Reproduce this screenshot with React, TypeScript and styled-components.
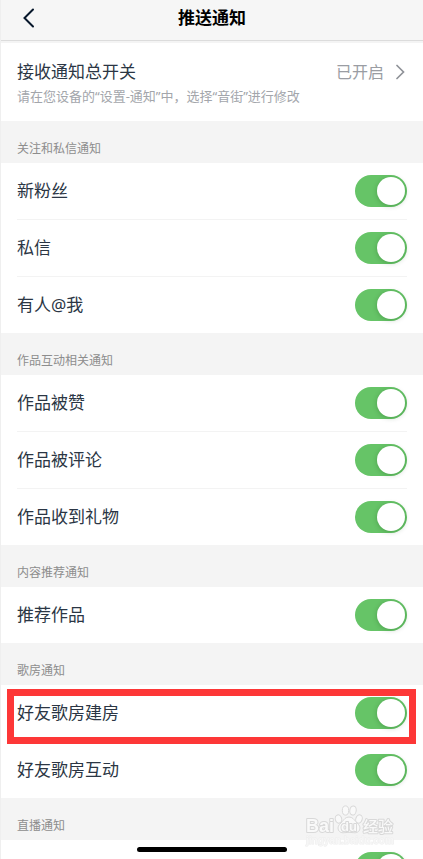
import React, { useId, useState } from 'react';
import styled, { createGlobalStyle } from 'styled-components';

const GlobalStyle = createGlobalStyle`
  *, *::before, *::after { box-sizing: border-box; }
  body {
    margin: 0;
    background: #f4f4f4;
    font-family: "Noto Sans", "Noto Sans CJK SC", sans-serif;
  }
`;

const Screen = styled.div`
  display: flex;
  flex-direction: column;
  height: 100vh;
  overflow: hidden;
  border-left: 1px solid #efefef;
  background: #f4f4f4;
`;

const TopBar = styled.header`
  display: grid;
  grid-template-columns: 56px 1fr 56px;
  align-items: center;
  flex: none;
  height: 41px;
  padding-bottom: 5px;
  background: #f6f6f6;
  border-bottom: 1px solid #dcdcdc;
`;

const BackButton = styled.button`
  display: flex;
  align-items: center;
  height: 32px;
  padding: 0 0 0 21px;
  border: 0;
  background: none;
  color: #07172b;
`;

const Title = styled.h1`
  margin: 0;
  font-size: 17px;
  line-height: 24px;
  font-weight: 700;
  text-align: center;
  color: #000;
`;

const Content = styled.main`
  flex: 1;
  min-height: 0;
  overflow-y: auto;
  padding-top: 2px;
  scrollbar-width: none;
`;

const MasterLink = styled.a`
  display: block;
  padding: 17px 16px 16px;
  background: #fff;
  color: #2b3644;
  text-decoration: none;
`;

const MasterLine = styled.span`
  display: flex;
  align-items: center;
  font-size: 17px;
  line-height: 24px;
`;

const MasterState = styled.span`
  margin-left: auto;
  margin-right: 12px;
  font-size: 16px;
  color: #9a9da3;
`;

const Hint = styled.span`
  display: block;
  margin-top: 3px;
  font-size: 13px;
  line-height: 18px;
  color: #a3a6ab;
`;

const GroupTitle = styled.h2`
  margin: 0;
  padding: 19px 16px 5px;
  font-size: 12px;
  line-height: 18px;
  font-weight: 400;
  color: #8d8d8d;
`;

const List = styled.ul`
  margin: 0;
  padding: 0;
  list-style: none;
  background: #fff;
`;

const Row = styled.li<{ $marked?: boolean }>`
  position: relative;
  padding: 0 16px;

  &:not(:last-child) > div {
    border-bottom: 1px solid #f3f3f3;
  }

  ${({ $marked }) =>
    $marked &&
    `
    &::after {
      content: "";
      position: absolute;
      inset: 4px 7px -2px 6px;
      border: 7px solid #fd3737;
      pointer-events: none;
    }
  `}
`;

const RowBody = styled.div`
  display: flex;
  align-items: center;
  justify-content: space-between;
  padding: 12px 0;
`;

const RowLabel = styled.label`
  font-size: 17px;
  line-height: 24px;
  color: #2b3644;
`;

const Toggle = styled.input`
  appearance: none;
  position: relative;
  flex: none;
  width: 52px;
  height: 32px;
  margin: 0 0 0 auto;
  border-radius: 16px;
  background: #e3e3e5;

  &:checked {
    background: #66c467;
  }

  &::before {
    content: "";
    position: absolute;
    top: 2px;
    left: 2px;
    width: 28px;
    height: 28px;
    border-radius: 50%;
    background: #fff;
    box-shadow: 0 1px 5px rgba(0, 60, 0, 0.25);
  }

  &:checked::before {
    left: 22px;
  }
`;

const HomeIndicator = styled.div`
  position: fixed;
  left: 50%;
  bottom: 7px;
  width: 150px;
  height: 5px;
  border-radius: 3px;
  background: #000;
  transform: translateX(-50%);
`;

const Watermark = styled.svg`
  position: fixed;
  right: 8px;
  bottom: 0;
  width: 120px;
  height: 64px;
  pointer-events: none;
`;

interface Item {
  label: string;
  name?: string;
  marked?: boolean;
}

const groups: { title: string; items: Item[] }[] = [
  {
    title: '关注和私信通知',
    items: [{ label: '新粉丝' }, { label: '私信' }, { label: '有人@我' }],
  },
  {
    title: '作品互动相关通知',
    items: [{ label: '作品被赞' }, { label: '作品被评论' }, { label: '作品收到礼物' }],
  },
  { title: '内容推荐通知', items: [{ label: '推荐作品' }] },
  {
    title: '歌房通知',
    items: [{ label: '好友歌房建房', marked: true }, { label: '好友歌房互动' }],
  },
  { title: '直播通知', items: [{ label: '', name: '直播通知' }] },
];

function SwitchRow({ label, name, marked }: Item) {
  const id = useId();
  const [on, setOn] = useState(true);
  return (
    <Row $marked={marked}>
      <RowBody>
        {label && <RowLabel htmlFor={id}>{label}</RowLabel>}
        <Toggle
          id={id}
          type="checkbox"
          role="switch"
          aria-label={name}
          checked={on}
          onChange={(e) => setOn(e.target.checked)}
        />
      </RowBody>
    </Row>
  );
}

function BaiduMark() {
  return (
    <Watermark viewBox="0 0 120 64" aria-hidden="true">
      <g
        fill="#f9f9f9"
        stroke="#d8d8d8"
        strokeWidth="1"
        strokeLinejoin="round"
        fontFamily='"Liberation Sans", "Noto Sans CJK SC", sans-serif'
      >
        <ellipse cx="43.5" cy="24" rx="3.2" ry="4.2" transform="rotate(-14 43.5 24)" />
        <ellipse cx="50.5" cy="15.5" rx="3.2" ry="4.6" />
        <ellipse cx="58" cy="15.5" rx="3.2" ry="4.6" transform="rotate(8 58 15.5)" />
        <ellipse cx="64" cy="24" rx="3.2" ry="4.2" transform="rotate(18 64 24)" />
        <path d="M54 22c-3.400 0-5 2.400-6.700 4.500-1.900 2.300-4.300 3.600-4.300 6.500 0 3 2.300 4.800 5 4.800 2 0 4-.500 6-.500s4 .500 6 .500c2.700 0 5-1.800 5-4.800 0-2.900-2.400-4.200-4.300-6.500C59 24.400 57.400 22 54 22z" />
        <g fontWeight="700" strokeWidth="2" paintOrder="stroke">
          <text x="11" y="37" fontSize="18">Bai</text>
          <text x="46" y="36" fontSize="13">du</text>
          <text x="68" y="37" fontSize="15" fontWeight="500">经验</text>
          <text x="11" y="49" fontSize="10" fill="#f6f6f6" stroke="#ededed" strokeWidth="1">jingyan.baidu.com</text>
        </g>
      </g>
    </Watermark>
  );
}

export default function App() {
  return (
    <>
      <GlobalStyle />
      <Screen>
        <TopBar>
          <BackButton type="button" aria-label="返回">
            <svg width="14" height="20" viewBox="0 0 14 20" fill="none" stroke="currentColor" strokeWidth="2" strokeLinecap="round">
              <path d="M11 1.500 2.500 10 11 18.500" />
            </svg>
          </BackButton>
          <Title>推送通知</Title>
        </TopBar>
        <Content>
          <MasterLink href="#settings">
            <MasterLine>
              接收通知总开关
              <MasterState>已开启</MasterState>
              <svg width="11" height="16" viewBox="0 0 11 16" fill="none" stroke="#8f9298" strokeWidth="1.700" strokeLinecap="round">
                <path d="M1 1.500 7.500 8 1 14.500" />
              </svg>
            </MasterLine>
            <Hint>请在您设备的“设置-通知”中，选择“音街”进行修改</Hint>
          </MasterLink>
          {groups.map((group) => (
            <section key={group.title}>
              <GroupTitle>{group.title}</GroupTitle>
              <List>
                {group.items.map((item) => (
                  <SwitchRow key={item.label} {...item} />
                ))}
              </List>
            </section>
          ))}
        </Content>
      </Screen>
      <HomeIndicator />
      <BaiduMark />
    </>
  );
}
